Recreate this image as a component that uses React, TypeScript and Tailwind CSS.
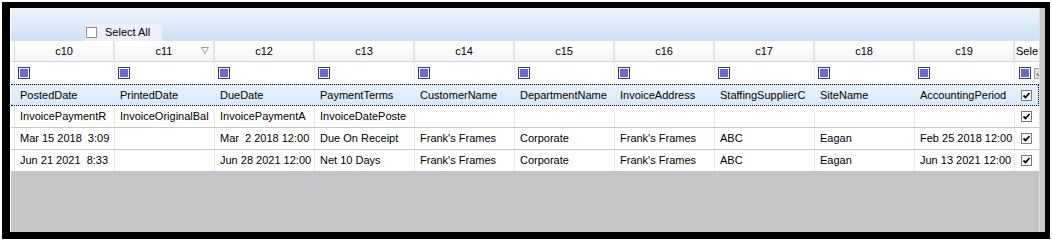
import React from "react";

const font = { fontFamily: '"Liberation Sans", Arial, sans-serif' };

const headers = ["c10", "c11", "c12", "c13", "c14", "c15", "c16", "c17", "c18", "c19"];

const focusRow = [
  "PostedDate",
  "PrintedDate",
  "DueDate",
  "PaymentTerms",
  "CustomerName",
  "DepartmentName",
  "InvoiceAddress",
  "StaffingSupplierC",
  "SiteName",
  "AccountingPeriod",
];

const rows = [
  ["InvoicePaymentR", "InvoiceOriginalBal", "InvoicePaymentA", "InvoiceDatePoste", "", "", "", "", "", ""],
  ["Mar 15 2018  3:09", "", "Mar  2 2018 12:00", "Due On Receipt", "Frank's Frames", "Corporate", "Frank's Frames", "ABC", "Eagan", "Feb 25 2018 12:00"],
  ["Jun 21 2021  8:33", "", "Jun 28 2021 12:00", "Net 10 Days", "Frank's Frames", "Corporate", "Frank's Frames", "ABC", "Eagan", "Jun 13 2021 12:00"],
];

function CheckBox({ gray = false }: { gray?: boolean }) {
  return (
    <div
      className={`w-[11px] h-[11px] shrink-0 border ${gray ? "border-[#a0a0a0] bg-[#e4e4e4]" : "border-[#7a7a7a] bg-white"} flex items-center justify-center`}
    >
      <svg width="9" height="9" viewBox="0 0 9 9">
        <path d="M1.5 4.5 L3.5 6.5 L7.5 2" stroke={gray ? "#8a8a8a" : "#000"} strokeWidth="1.8" fill="none" />
      </svg>
    </div>
  );
}

function FilterSquare() {
  return (
    <div className="w-[12px] h-[12px] shrink-0 border border-[#3a3878] bg-white p-[1px]">
      <div className="w-full h-full bg-[#6b67d6]" />
    </div>
  );
}

export default function App() {
  return (
    <div className="w-[1052px] h-[241px] bg-white p-[2px]" style={font}>
      <div className="h-full border-l-[8px] border-t-[6px] border-r-[5px] border-b-[7px] border-black flex">
        <div className="flex-1 flex flex-col border-l border-white min-w-0">
          {/* group panel */}
          <div className="h-[33px] shrink-0 bg-gradient-to-b from-[#eef5fd] to-[#cbe1f6] flex items-end pl-[74px]">
            <div className="w-[77px] h-[17px] bg-[#eeeefb] flex items-center pl-[1px] gap-[8px]">
              <div className="w-[11px] h-[11px] border border-[#8c8c8c] bg-white" />
              <span className="text-[11px] text-black leading-none">Select All</span>
            </div>
          </div>

          {/* header row */}
          <div className="h-[21px] shrink-0 flex bg-gradient-to-b from-white to-[#f5f5f8] border-b border-[#d4d4d4]">
            <div className="w-[4px] shrink-0 border-r border-[#dcdcdc]" />
            {headers.map((h, i) => (
              <div
                key={h}
                className="w-[100px] shrink-0 relative flex items-center justify-center border-r-2 border-[#e4e4e8] text-[11px] text-black"
              >
                {h}
                {i === 1 && (
                  <svg className="absolute right-[4px] top-[6px]" width="8" height="7" viewBox="0 0 8 7">
                    <path d="M0.5 0.5 H7.5 L4 6.5 Z" stroke="#999" strokeWidth="1" fill="none" />
                  </svg>
                )}
              </div>
            ))}
            <div className="flex-1 min-w-0 overflow-hidden flex items-center pl-[1px] text-[11px] text-black whitespace-nowrap">
              Sele
            </div>
          </div>

          {/* filter row */}
          <div className="h-[22px] shrink-0 flex bg-white">
            <div className="w-[4px] shrink-0 border-r border-[#ececec]" />
            {headers.map((h) => (
              <div key={h} className="w-[100px] shrink-0 flex items-center pl-[3px] border-r border-[#ececec]">
                <FilterSquare />
              </div>
            ))}
            <div className="flex-1 min-w-0 overflow-hidden flex items-center pl-[4px] gap-[3px]">
              <FilterSquare />
              <CheckBox gray />
            </div>
          </div>

          {/* focused row */}
          <div className="h-[22px] shrink-0 flex bg-gradient-to-b from-[#e8f3fd] to-[#d6eafb] border-t border-b border-r border-dotted border-black">
            <div className="w-[4px] shrink-0" />
            {focusRow.map((t, i) => (
              <div
                key={i}
                className="w-[100px] shrink-0 flex items-center pl-[5px] overflow-hidden whitespace-pre text-[11px] text-black"
              >
                {t}
              </div>
            ))}
            <div className="flex-1 min-w-0 flex items-center pl-[6px]">
              <CheckBox />
            </div>
          </div>

          {/* data rows */}
          {rows.map((r, ri) => (
            <div key={ri} className="h-[22px] shrink-0 flex bg-white border-b border-[#c6c6c6]">
              <div className="w-[4px] shrink-0 border-r border-[#e8e8e8]" />
              {r.map((t, i) => (
                <div
                  key={i}
                  className="w-[100px] shrink-0 flex items-center pl-[5px] overflow-hidden whitespace-pre border-r border-[#e8e8e8] text-[11px] text-black"
                >
                  {t}
                </div>
              ))}
              <div className="flex-1 min-w-0 flex items-center pl-[6px]">
                <CheckBox />
              </div>
            </div>
          ))}

          <div className="flex-1 bg-[#c6c4c7]" />
        </div>
        <div className="w-[6px] shrink-0 bg-[#c9c9c9] border-l border-[#dedede]" />
      </div>
    </div>
  );
}
